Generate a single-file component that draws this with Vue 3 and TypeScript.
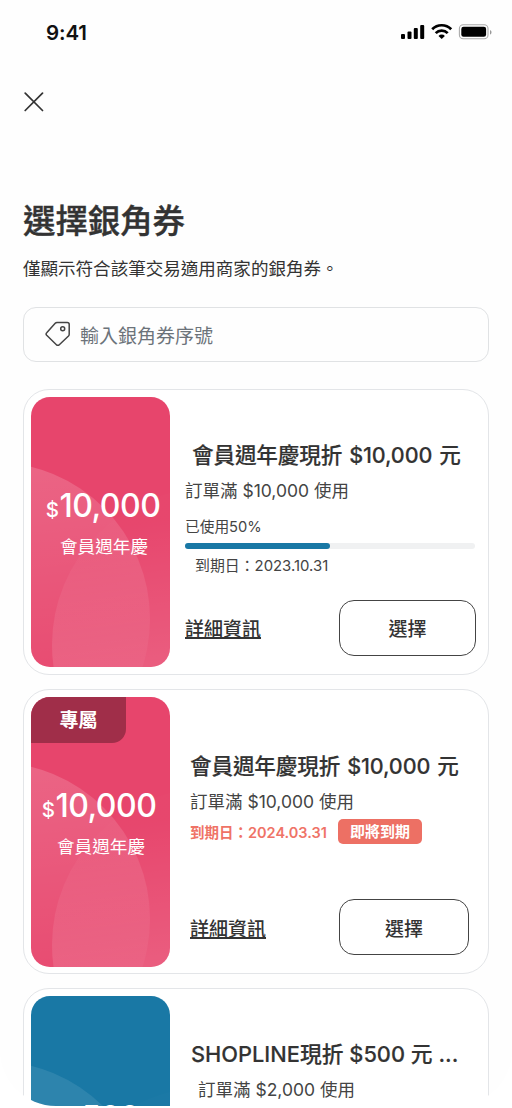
<script setup lang="ts">
interface Coupon {
  id: number
  theme: 'pink' | 'blue'
  variant: string
  amount: string
  label?: string
  exclusive?: boolean
  title: string
  condition: string
  used?: number
  expiry?: string
  expiring?: boolean
  selectable?: boolean
}

const coupons: Coupon[] = [
  { id: 1, theme: 'pink', variant: 'progress', amount: '10,000', label: '會員週年慶', title: '會員週年慶現折 $10,000 元', condition: '訂單滿 $10,000 使用', used: 50, expiry: '2023.10.31', selectable: true },
  { id: 2, theme: 'pink', variant: 'expiring', amount: '10,000', label: '會員週年慶', exclusive: true, title: '會員週年慶現折 $10,000 元', condition: '訂單滿 $10,000 使用', expiry: '2024.03.31', expiring: true, selectable: true },
  { id: 3, theme: 'blue', variant: 'brand', amount: '500', title: 'SHOPLINE現折 $500 元 ...', condition: '訂單滿 $2,000 使用' },
]
</script>

<template>
  <main class="screen">
    <header class="status">
      <span class="time">9:41</span>
      <svg class="indicators" width="92" height="18" viewBox="0 0 92 18">
        <rect x="1" y="11" width="4" height="5" rx="1" />
        <rect x="7.500" y="8.500" width="4" height="7.500" rx="1" />
        <rect x="13.800" y="5" width="4" height="11" rx="1" />
        <rect x="20.200" y="2" width="4" height="14" rx="1" />
        <g fill="none" stroke="#000" stroke-width="2.700">
          <path d="M32.200 6.300a13.200 13.200 0 0 1 19 0" />
          <path d="M35.700 10.100a8.300 8.300 0 0 1 12 0" />
        </g>
        <path d="M38.500 12.900a4.600 4.600 0 0 1 6.400 0L41.700 16.100z" />
        <rect x="59.400" y="1.800" width="28.600" height="14" rx="3.800" fill="none" stroke="#aaa" stroke-width="1.100" />
        <rect x="61.300" y="3.800" width="24.800" height="10" rx="2.200" />
        <path d="M90 7v4.600c2-.8 2-3.800 0-4.600z" fill="#999" />
      </svg>
    </header>

    <button class="close" aria-label="關閉">
      <svg width="20" height="20" viewBox="0 0 20 20"><path d="M1.200 1.200 18.500 18.500M18.500 1.200 1.200 18.500" fill="none" stroke="#333" stroke-width="1.700" stroke-linecap="round" /></svg>
    </button>

    <h1>選擇銀角券</h1>
    <p class="intro">僅顯示符合該筆交易適用商家的銀角券。</p>

    <div class="field">
      <svg width="26" height="26" viewBox="0 0 26 26" fill="none" stroke="#444" stroke-width="1.500" stroke-linejoin="round">
        <path d="M12 1.400h10.200a2 2 0 0 1 2 2v9.900c0 .7-.2 1.200-.7 1.700L14.300 23.700a2 2 0 0 1-2.900 0L1.700 14.200a1.800 1.800 0 0 1 0-2.500L10.200 2.200a2.500 2.500 0 0 1 1.800-.8z" />
        <circle cx="17.700" cy="7.700" r="2" />
      </svg>
      <span>輸入銀角券序號</span>
    </div>

    <section class="list">
      <article v-for="c in coupons" :key="c.id" class="card" :class="c.variant">
        <div class="art" :class="c.theme">
          <svg class="waves" width="139" height="270" viewBox="0 0 139 270">
            <defs>
              <linearGradient :id="`fade-${c.id}`" gradientUnits="userSpaceOnUse" x1="90" y1="130" x2="110" y2="270">
                <stop offset="0" stop-color="#fff" stop-opacity=".01" />
                <stop offset="1" stop-color="#fff" stop-opacity=".13" />
              </linearGradient>
              <linearGradient :id="`wave-${c.id}`" gradientUnits="userSpaceOnUse" x1="0" y1="70" x2="25" y2="270">
                <stop offset="0" stop-color="#fff" stop-opacity=".17" />
                <stop offset="1" stop-color="#fff" stop-opacity=".04" />
              </linearGradient>
            </defs>
            <circle cx="-38" cy="222" r="157" :fill="c.theme === 'pink' ? `url(#wave-${c.id})` : '#fff'" :fill-opacity="c.theme === 'pink' ? 1 : .09" />
            <circle cx="178" cy="248" r="157" :fill="`url(#fade-${c.id})`" />
          </svg>
          <span v-if="c.exclusive" class="ribbon">專屬</span>
          <div class="amount"><small>$</small>{{ c.amount }}</div>
          <div v-if="c.label" class="label">{{ c.label }}</div>
        </div>
        <div class="info">
          <h2>{{ c.title }}</h2>
          <p class="condition">{{ c.condition }}</p>
          <template v-if="c.used">
            <p class="used">已使用{{ c.used }}%</p>
            <div class="track"><div class="bar" :style="{ width: c.used + '%' }"></div></div>
          </template>
          <div v-if="c.expiry" class="expiry">
            <span>到期日：{{ c.expiry }}</span>
            <span v-if="c.expiring" class="badge">即將到期</span>
          </div>
          <div v-if="c.selectable" class="actions">
            <a>詳細資訊</a>
            <button class="select">選擇</button>
          </div>
        </div>
      </article>
    </section>
  </main>
</template>

<style>
body { background: #fff; overflow: hidden; }
</style>

<style scoped>
* { box-sizing: border-box; }
.screen {
  width: 512px; height: 1106px; overflow: hidden; background: #fefefe; color: #333;
  border-radius: 0 0 56px 56px;
  font-family: Inter, "Noto Sans CJK TC", sans-serif;
  display: flex; flex-direction: column;
}
h1, h2, p { margin: 0; }
button { background: none; border: 0; padding: 0; font: inherit; color: inherit; }
.status { height: 64px; flex: none; display: flex; justify-content: space-between; padding: 1px 20px 0 46px; align-items: center; }
.time { font-size: 20.500px; font-weight: 600; color: #111; letter-spacing: -.1px; }
.indicators { display: block; margin-bottom: 1px; }
.close { align-self: flex-start; margin: 28px 0 0 24px; height: 20px; }
.close svg { display: block; }
h1 { margin: 87px 0 0 23px; font-size: 32.400px; line-height: 46px; font-weight: 500; height: 46px; flex: none; -webkit-text-stroke: .4px currentColor; }
.intro { margin: 11px 0 0 23px; font-size: 17.550px; line-height: 26px; flex: none; white-space: nowrap; }
.field {
  flex: none; margin: 25px 23px 0; height: 55px; width: 466px; border: 1px solid #e0e2e4; border-radius: 13px;
  display: flex; align-items: center; gap: 9px; padding-left: 21px; font-size: 19px; color: #6c737a;
}
.field svg { margin-bottom: 1px; }
.field span { margin-bottom: 1px; }
.list { margin: 27px 23px 0; display: flex; flex-direction: column; gap: 14px; flex: none; }
.card { height: 285.500px; width: 466px; border: 1px solid #e3e5e8; border-radius: 26px; padding: 7px; display: flex; flex: none; background: #fff; }
.art { width: 139px; height: 270px; flex: none; border-radius: 19px; overflow: hidden; position: relative; color: #fff; text-align: center; padding-top: 85px; }
.art.pink { background: #e7456c; }
.art.blue { background: #1978a5; }
.waves { position: absolute; left: 0; top: 0; }
.ribbon { position: absolute; left: 0; top: 0; width: 95px; height: 46px; border-radius: 0 0 14px 0; background: #a02e49; font-size: 19px; line-height: 48px; font-weight: 700; }
.amount { position: relative; font-size: 32px; line-height: 48px; font-weight: 500; letter-spacing: -.5px; padding-left: 5px; white-space: nowrap; }
.amount small { font-size: 20.500px; margin-right: 1px; }
.label { position: relative; font-size: 17.600px; line-height: 26px; padding-left: 7px; }
.expiring .amount { padding-left: 0; padding-right: 3px; }
.expiring .label { padding-left: 1px; }
.info { flex: 1; padding: 43px 5px 0 15px; display: flex; flex-direction: column; white-space: nowrap; min-width: 0; }
h2 { font-size: 21.600px; line-height: 30px; font-weight: 500; padding-left: 7px; -webkit-text-stroke: .15px currentColor; }
.progress h2, .expiring h2 { letter-spacing: -.15px; word-spacing: 1.500px; }
.condition { font-size: 17.500px; line-height: 26px; margin-top: 8px; color: #444; }
.used { font-size: 14.700px; line-height: 20px; margin-top: 13px; color: #444; }
.track { width: 290px; height: 6px; border-radius: 3px; background: #f0f1f2; margin-top: 6px; }
.bar { height: 6px; border-radius: 3px; background: #1978a5; }
.expiry { display: flex; align-items: center; font-size: 14.900px; height: 24px; margin-top: 3px; padding-left: 10px; color: #444; }
.actions { margin-top: auto; margin-bottom: 11px; display: flex; justify-content: space-between; align-items: center; }
.actions a { font-size: 19px; font-weight: 500; text-decoration: underline; text-decoration-thickness: 1.500px; text-underline-offset: 1px; text-decoration-skip-ink: none; }
.select { width: 137px; height: 56px; border: 1.500px solid #444; border-radius: 15px; font-size: 19px; font-weight: 500; }
.expiring .info { padding: 54px 12px 0 20px; }
.expiring h2 { padding-left: 0; }
.expiring .expiry { color: #ef7367; padding: 0; font-weight: 600; margin-top: 5px; gap: 11px; font-size: 14.500px; }
.badge { width: 84px; height: 25px; border-radius: 5px; background: #ed7064; color: #fff; text-align: center; line-height: 25px; font-size: 15px; }
.expiring .select { width: 130px; }
.brand .info { padding-left: 21px; }
.brand h2 { padding-left: 0; font-size: 21.800px; }
.brand .condition { padding-left: 7px; }
.brand .amount { margin-top: 12px; font-size: 31px; padding-left: 6px; }
</style>
